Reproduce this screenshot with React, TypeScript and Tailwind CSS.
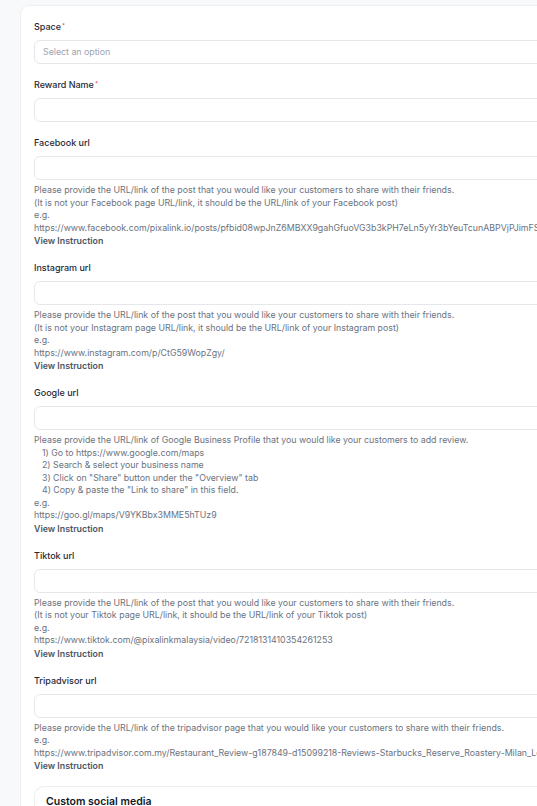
import React from 'react';

type FieldProps = {
  label: string;
  required?: boolean;
  placeholder?: string;
  children?: React.ReactNode;
};

const Field: React.FC<FieldProps> = ({ label, required, placeholder, children }) => (
  <div className="mb-[14px]">
    <label className="block text-[9px] leading-[14px] font-medium text-[#1f2937] mb-[6px]">
      {label}
      {required && <sup className="text-[6px] text-[#ef4444] ml-[1px] relative -top-[2px]">*</sup>}
    </label>
    <div className="h-[24px] rounded-[6px] border border-[#e5e7eb] bg-white flex items-center px-[8px]">
      {placeholder && <span className="text-[8.8px] text-[#9ca3af]">{placeholder}</span>}
    </div>
    {children && (
      <div className="mt-[4px] text-[8.8px] leading-[12.5px] text-[#6b7280] whitespace-nowrap">{children}</div>
    )}
  </div>
);

const ViewInstruction = () => (
  <div className="font-semibold text-[#4b5563] leading-[13px]">View Instruction</div>
);

export default function App() {
  return (
    <div className="w-[537px] h-[806px] overflow-hidden bg-[#f8f9fb] pl-[20px] pt-[5px]" style={{ fontFamily: 'Inter, "Noto Sans", sans-serif' }}>
      <div className="w-[640px] rounded-l-[9px] border border-r-0 border-[#eceef1] bg-white pt-[14px] pl-[13px]">
        <Field label="Space" required placeholder="Select an option" />
        <Field label="Reward Name" required />

        <Field label="Facebook url">
          <div>Please provide the URL/link of the post that you would like your customers to share with their friends.</div>
          <div>(It is not your Facebook page URL/link, it should be the URL/link of your Facebook post)</div>
          <div>e.g.</div>
          <div>https://www.facebook.com/pixalink.io/posts/pfbid08wpJnZ6MBXX9gahGfuoVG3b3kPH7eLn5yYr3bYeuTcunABPVjPJimFS5l</div>
          <ViewInstruction />
        </Field>

        <Field label="Instagram url">
          <div>Please provide the URL/link of the post that you would like your customers to share with their friends.</div>
          <div>(It is not your Instagram page URL/link, it should be the URL/link of your Instagram post)</div>
          <div>e.g.</div>
          <div>https://www.instagram.com/p/CtG59WopZgy/</div>
          <ViewInstruction />
        </Field>

        <Field label="Google url">
          <div>Please provide the URL/link of Google Business Profile that you would like your customers to add review.</div>
          <div className="pl-[8px]">1) Go to https://www.google.com/maps</div>
          <div className="pl-[8px]">2) Search &amp; select your business name</div>
          <div className="pl-[8px]">3) Click on "Share" button under the "Overview" tab</div>
          <div className="pl-[8px]">4) Copy &amp; paste the "Link to share" in this field.</div>
          <div>e.g.</div>
          <div>https://goo.gl/maps/V9YKBbx3MME5hTUz9</div>
          <ViewInstruction />
        </Field>

        <Field label="Tiktok url">
          <div>Please provide the URL/link of the post that you would like your customers to share with their friends.</div>
          <div>(It is not your Tiktok page URL/link, it should be the URL/link of your Tiktok post)</div>
          <div>e.g.</div>
          <div>https://www.tiktok.com/@pixalinkmalaysia/video/7218131410354261253</div>
          <ViewInstruction />
        </Field>

        <Field label="Tripadvisor url">
          <div>Please provide the URL/link of the tripadvisor page that you would like your customers to share with their friends.</div>
          <div>e.g.</div>
          <div>https://www.tripadvisor.com.my/Restaurant_Review-g187849-d15099218-Reviews-Starbucks_Reserve_Roastery-Milan_Lombardy.html</div>
          <ViewInstruction />
        </Field>

        <div className="rounded-l-[10px] border border-r-0 border-[#eceef1] pt-[8px] pl-[11px] h-[60px]">
          <div className="text-[10.5px] leading-[14px] font-semibold text-[#111827]">Custom social media</div>
        </div>
      </div>
    </div>
  );
}
